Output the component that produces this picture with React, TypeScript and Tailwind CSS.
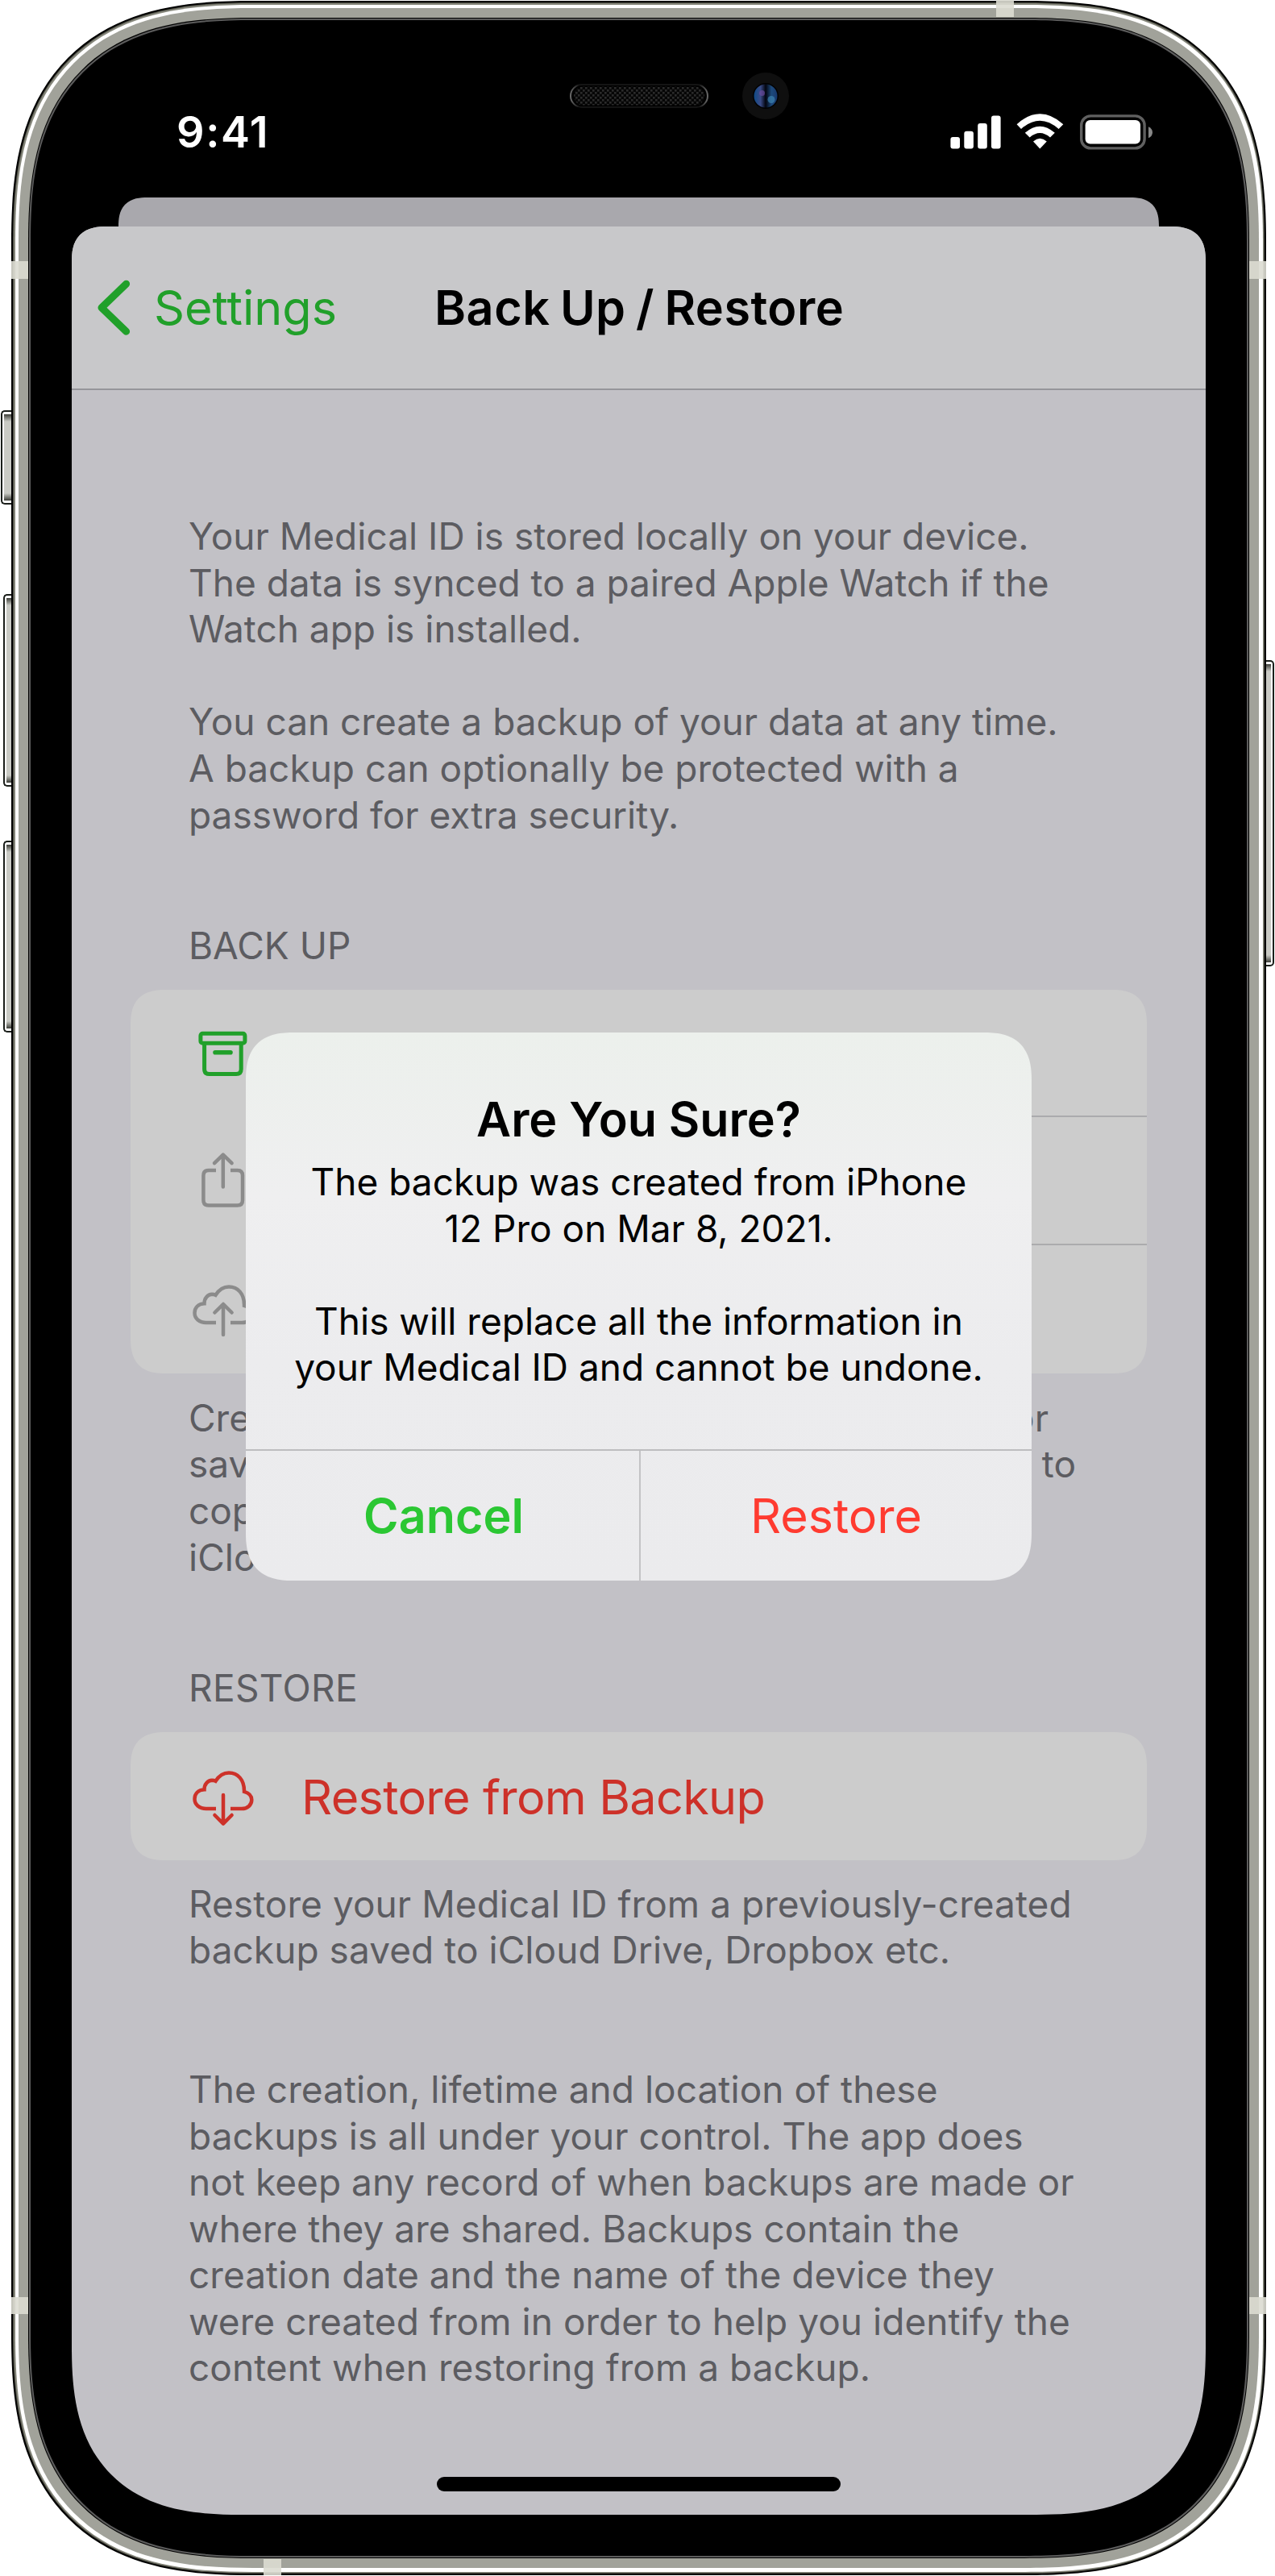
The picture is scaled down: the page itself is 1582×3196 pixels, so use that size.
import type { ReactNode } from "react";

const squircle = "[corner-shape:superellipse(1.37)]";

function Band({ className }: { className: string }) {
  return <div className={`absolute bg-[#dcdbd2]/90 ${className}`} />;
}

function SideButton({ className, side }: { className: string; side: "left" | "right" }) {
  const shape =
    side === "left"
      ? "rounded-l-[5px] border-y-[2px] border-l-[2px]"
      : "rounded-r-[5px] border-y-[2px] border-r-[2px]";
  const inner = side === "left" ? "ml-[2px] mr-0" : "mr-[2px] ml-0";
  return (
    <div className={`absolute flex flex-col border-[#1a1e1a] bg-white py-[3px] ${shape} ${className}`}>
      <div
        className={`grow bg-[linear-gradient(to_bottom,#3c3e38_0px,#c9cac4_9px,#c9cac4_calc(100%-9px),#3c3e38_100%)] ${inner}`}
      />
    </div>
  );
}

const CLOUD =
  "M29 47H17C8 47 2.5 41.5 2.5 35C2.5 28.5 7 23.8 14.5 23.3C14.5 16.5 19 12 24 11.8C26 11.8 27 12 28.5 12.8C32.5 6.5 38 2.5 45 2.5C56 2.5 64.3 11 64 25.8C70 27.5 73.3 31 73.3 36C73.3 42.5 68 47 61 47H47";

function ArchiveIcon() {
  return (
    <svg width="76" height="80" viewBox="0 0 76 80" fill="none" stroke="#21a02a" strokeWidth="5" className="shrink-0">
      <rect x="9.9" y="15.3" width="55" height="12" rx="2.6" />
      <path d="M14.6 27.5V59.5Q14.6 65.6 20.7 65.6H54.1Q60.2 65.6 60.2 59.5V27.5" />
      <path d="M28 38.8H47" strokeWidth="5.6" strokeLinecap="round" />
    </svg>
  );
}

function ShareIcon() {
  return (
    <svg
      width="76"
      height="80"
      viewBox="0 0 76 80"
      fill="none"
      stroke="#8b8b8b"
      strokeWidth="4.5"
      strokeLinecap="round"
      strokeLinejoin="round"
      className="shrink-0"
    >
      <path d="M29 26H20Q13.4 26 13.4 32.5V63Q13.4 69.6 20 69.6H55.5Q62 69.6 62 63V32.5Q62 26 55.5 26H47" strokeLinecap="butt" />
      <path d="M37.8 46.5V7M27 17.2L37.8 6.6L48.6 17.2" />
    </svg>
  );
}

function CloudUpIcon() {
  return (
    <svg width="76" height="80" viewBox="0 0 76 80" fill="none" stroke="#8b8b8b" strokeWidth="4.5" className="shrink-0">
      <path d={CLOUD} transform="translate(0 10)" />
      <path d="M38 72V34.5M27.4 44.5L38 34L48.6 44.5" strokeLinecap="round" strokeLinejoin="round" />
    </svg>
  );
}

function CloudDownIcon() {
  return (
    <svg width="76" height="80" viewBox="0 0 76 80" fill="none" stroke="#cd3129" strokeWidth="4.5" className="shrink-0">
      <path d={CLOUD} transform="translate(0 9)" />
      <path d="M38 39V74M27.4 64L38 74.6L48.6 64" strokeLinecap="round" strokeLinejoin="round" />
    </svg>
  );
}

function StatusBar() {
  return (
    <div className="flex h-[220px] items-start justify-between pt-[106px] pr-[116px] pl-[181px] text-white">
      <div className="text-[54px] leading-[66px] font-semibold tracking-[1.6px]">9:41</div>
      <svg width="252" height="50" viewBox="1179 139 252 50" className="mt-[8px]">
        <g fill="#fff">
          <rect x="1179.4" y="170" width="11.6" height="14.4" rx="3" />
          <rect x="1196.3" y="162.8" width="11.6" height="21.6" rx="3" />
          <rect x="1213.2" y="153" width="11.6" height="31.4" rx="3" />
          <rect x="1230" y="143.4" width="11.6" height="41" rx="3" />
          <path d="M1261.6 154.2Q1290.3 128.5 1319.3 154.2L1313.6 160Q1290.3 139.5 1267 160Z" />
          <path d="M1271.8 164.8Q1290.3 148.5 1308.8 164.8L1303 170.6Q1290.3 159.5 1277.6 170.6Z" />
          <path d="M1282 175.4Q1290.3 168.2 1298.8 175.4L1290.3 184.4Z" />
        </g>
        <rect x="1341.7" y="143.9" width="78.4" height="40" rx="11.5" fill="none" stroke="#606060" strokeWidth="3.4" />
        <rect x="1346.6" y="149" width="68.4" height="29.6" rx="6" fill="#fff" />
        <path d="M1425 157.2Q1430 159.5 1430 164.2Q1430 169 1425 171.3Z" fill="#888" />
      </svg>
    </div>
  );
}

function Notch() {
  return (
    <svg width="276" height="60" viewBox="705 89 276 60" className="absolute top-[64px] left-[667px]">
      <defs>
        <pattern id="mesh" width="6" height="6" patternUnits="userSpaceOnUse">
          <rect width="6" height="6" fill="#060606" />
          <rect width="2.6" height="2.6" fill="#2b2b2b" />
          <rect x="3" y="3" width="2.6" height="2.6" fill="#2b2b2b" />
        </pattern>
        <linearGradient id="rim">
          <stop offset="0" stopColor="#6a6a6a" />
          <stop offset="0.06" stopColor="#141414" />
          <stop offset="0.94" stopColor="#141414" />
          <stop offset="1" stopColor="#6a6a6a" />
        </linearGradient>
        <linearGradient id="lens">
          <stop offset="0" stopColor="#0f4a86" />
          <stop offset="0.28" stopColor="#3a4b86" />
          <stop offset="0.5" stopColor="#02040e" />
          <stop offset="0.75" stopColor="#1d4a7c" />
          <stop offset="1" stopColor="#17386e" />
        </linearGradient>
      </defs>
      <rect x="708" y="105" width="170" height="28" rx="14" fill="#000" stroke="url(#rim)" strokeWidth="2" />
      <rect x="712" y="107.5" width="162" height="23" rx="11.5" fill="url(#mesh)" />
      <circle cx="950" cy="119" r="29" fill="#0f0f0f" />
      <circle cx="950" cy="119" r="16" fill="#020202" />
      <circle cx="950" cy="119" r="14.5" fill="url(#lens)" />
      <circle cx="945.5" cy="115.5" r="3.5" fill="#6a4a9c" opacity="0.7" />
      <circle cx="957" cy="123.5" r="4.5" fill="#3d83b0" opacity="0.7" />
    </svg>
  );
}

function Lines({ children, className = "" }: { children: ReactNode; className?: string }) {
  return (
    <p className={`text-[46px] leading-[57.6px] whitespace-pre-line text-[#5c5c61] ${className}`}>{children}</p>
  );
}

function Row({ icon, divider = false }: { icon: ReactNode; divider?: boolean }) {
  return (
    <div className="flex h-[158.6px] items-center pl-[77px]">
      {icon}
      <div className={`ml-[59px] h-full grow ${divider ? "border-b-2 border-[#ababad]" : ""}`} />
    </div>
  );
}

function Alert() {
  return (
    <div
      className={`absolute top-[1036px] left-[216px] flex h-[680px] w-[975px] flex-col overflow-hidden rounded-[60px] bg-[linear-gradient(to_bottom,#ecf0ec,#efeff0_30%,#ececee_60%,#ebebed)] text-center text-black ${squircle}`}
    >
      <div className="h-[518px] pt-[70px]">
        <h2 className="text-[59.2px] leading-[76px] font-semibold">Are You Sure?</h2>
        <p className="mt-[11px] text-[46px] leading-[57.6px] whitespace-pre-line">
          {"The backup was created from iPhone\n12 Pro on Mar 8, 2021.\n\nThis will replace all the information in\nyour Medical ID and cannot be undone."}
        </p>
      </div>
      <div className="flex grow border-t-2 border-[#bdbdbf] text-[59.2px] leading-[161px]">
        <div className="flex-1 border-r-2 border-[#c3c3c5] pl-[3px] font-semibold text-[#2bc733]">Cancel</div>
        <div className="flex-1 text-[#ff3b30]">Restore</div>
      </div>
    </div>
  );
}

function Screen() {
  return (
    <div className="relative mx-[51px] h-[2875px]">
      <div className={`mx-[58px] h-[36px] rounded-t-[42px] bg-[#a9a8ad] ${squircle}`} />
      <div
        className={`flex h-[2839px] flex-col overflow-hidden rounded-t-[44px] rounded-b-[210px] bg-[#c2c1c6] ${squircle}`}
      >
        <header className="flex h-[203px] shrink-0 items-start border-b-2 border-[#96969a] bg-[#c8c8ca] pt-[62px]">
          <svg
            width="44"
            height="72"
            viewBox="120 346 44 72"
            className="mt-[3px] ml-[31px]"
            fill="none"
            stroke="#21a02a"
            strokeWidth="9"
            strokeLinecap="round"
            strokeLinejoin="round"
          >
            <path d="M156.6 352.2L126 381.7L156.6 411.2" />
          </svg>
          <span className="ml-[27px] text-[59.3px] leading-[78px] text-[#21a02a]">Settings</span>
          <h1 className="ml-[121px] text-[59.3px] leading-[78px] font-semibold tracking-[0.5px] text-black [word-spacing:-3px]">
            Back Up / Restore
          </h1>
        </header>
        <main className="px-[73px]">
          <Lines className="mt-[153px] px-[72px]">
            {"Your Medical ID is stored locally on your device.\nThe data is synced to a paired Apple Watch if the\nWatch app is installed.\n\nYou can create a backup of your data at any time.\nA backup can optionally be protected with a\npassword for extra security."}
          </Lines>
          <h3 className="mt-[105px] px-[72px] text-[46px] leading-[57.6px] text-[#5c5c61]">BACK UP</h3>
          <div className={`mt-[25px] h-[476px] rounded-[44px] bg-[#ccc] ${squircle}`}>
            <Row icon={<ArchiveIcon />} divider />
            <Row icon={<ShareIcon />} divider />
            <Row icon={<CloudUpIcon />} />
          </div>
          <div className="mt-[27px] px-[72px] text-[46px] leading-[57.6px] text-[#5c5c61]">
            <div className="flex w-[1067px] justify-between">
              <span>Crea</span>
              <span>or</span>
            </div>
            <div className="flex w-[1101px] justify-between">
              <span>save</span>
              <span>to</span>
            </div>
            <div>copy</div>
            <div>iClo</div>
          </div>
          <h3 className="mt-[105px] px-[72px] text-[46px] leading-[57.6px] tracking-[0.35px] text-[#5c5c61]">RESTORE</h3>
          <div className={`mt-[25px] flex h-[159px] items-center rounded-[44px] bg-[#ccc] pl-[77px] ${squircle}`}>
            <CloudDownIcon />
            <span className="mt-[3px] ml-[59px] text-[59.3px] leading-[78px] tracking-[-0.65px] text-[#cd3129]">
              Restore from Backup
            </span>
          </div>
          <Lines className="mt-[26px] px-[72px] tracking-[0.05px]">
            {"Restore your Medical ID from a previously-created\nbackup saved to iCloud Drive, Dropbox etc."}
          </Lines>
          <Lines className="mt-[115px] px-[72px] tracking-[0.04px]">
            {"The creation, lifetime and location of these\nbackups is all under your control. The app does\nnot keep any record of when backups are made or\nwhere they are shared. Backups contain the\ncreation date and the name of the device they\nwere created from in order to help you identify the\ncontent when restoring from a backup."}
          </Lines>
        </main>
      </div>
      <Alert />
      <div className="absolute bottom-[29px] left-[453px] h-[18px] w-[501px] rounded-full bg-black" />
    </div>
  );
}

export default function App() {
  return (
    <div className="relative h-[3196px] w-[1582px] overflow-hidden bg-white px-[14px] py-[1px] font-['Inter',sans-serif]">
      <SideButton side="left" className="top-[509px] left-[1px] h-[117px] w-[13px]" />
      <SideButton side="left" className="top-[737px] left-[4px] h-[239px] w-[10px]" />
      <SideButton side="left" className="top-[1043px] left-[4px] h-[238px] w-[10px]" />
      <SideButton side="right" className="top-[819px] left-[1571px] h-[380px] w-[10px]" />

      <div className={`relative h-[3194px] w-[1557px] rounded-[300px] bg-black p-[2px] ${squircle}`}>
        <div className={`h-full rounded-[298px] bg-[#4b4c42] p-[1px] ${squircle}`}>
          <div className={`h-full rounded-[297px] bg-[#85867b] p-[1.5px] ${squircle}`}>
            <div className={`h-full rounded-[295px] bg-white p-[4.5px] ${squircle}`}>
              <div className={`h-full rounded-[291px] bg-[#a1a29a] p-[12px] ${squircle}`}>
                <div className={`h-full rounded-[279px] bg-black p-[1px] ${squircle}`}>
                  <div className={`h-full rounded-[278px] bg-[#5c5c5c] p-[2px] ${squircle}`}>
                    <div className={`relative h-full rounded-[276px] bg-black ${squircle}`}>
                      <Notch />
                      <StatusBar />
                      <Screen />
                    </div>
                  </div>
                </div>
              </div>
            </div>
          </div>
        </div>
      </div>

      <Band className="top-[324px] left-[14px] h-[22px] w-[21px]" />
      <Band className="top-[324px] left-[1550px] h-[22px] w-[21px]" />
      <Band className="top-[2850px] left-[14px] h-[21px] w-[21px]" />
      <Band className="top-[2850px] left-[1550px] h-[21px] w-[21px]" />
      <Band className="top-0 left-[1236px] h-[21px] w-[22px]" />
      <Band className="top-[3175px] left-[327px] h-[20px] w-[22px]" />
    </div>
  );
}
